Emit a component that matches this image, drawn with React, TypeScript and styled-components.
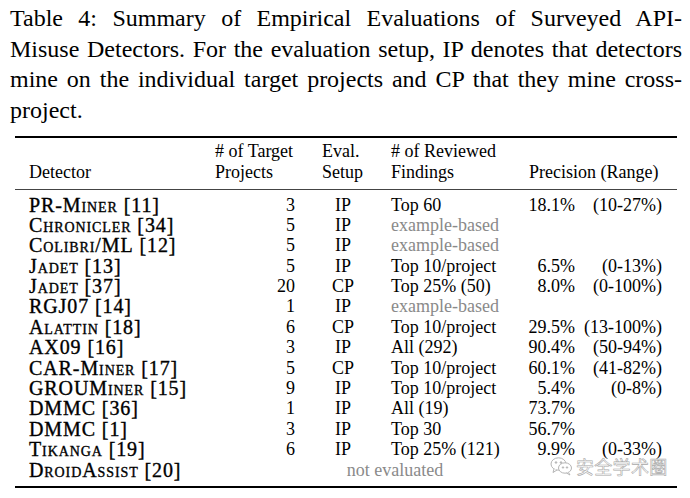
import React, { FC } from 'react';
import styled, { createGlobalStyle } from 'styled-components';

const GlobalStyle = createGlobalStyle`
  body {
    margin: 0;
    background: #fff;
    color: #000;
    font-family: 'Liberation Serif', 'Times New Roman', serif;
  }
`;

type Row = {
  name: string;
  cite: string;
  projects?: string;
  setup?: string;
  findings?: string;
  example?: boolean;
  precision?: string;
  range?: string;
};

const rows: Row[] = [
  { name: 'PR-Miner', cite: '[11]', projects: '3', setup: 'IP', findings: 'Top 60', precision: '18.1%', range: '(10-27%)' },
  { name: 'Chronicler', cite: '[34]', projects: '5', setup: 'IP', findings: 'example-based', example: true },
  { name: 'Colibri/ML', cite: '[12]', projects: '5', setup: 'IP', findings: 'example-based', example: true },
  { name: 'Jadet', cite: '[13]', projects: '5', setup: 'IP', findings: 'Top 10/project', precision: '6.5%', range: '(0-13%)' },
  { name: 'Jadet', cite: '[37]', projects: '20', setup: 'CP', findings: 'Top 25% (50)', precision: '8.0%', range: '(0-100%)' },
  { name: 'RGJ07', cite: '[14]', projects: '1', setup: 'IP', findings: 'example-based', example: true },
  { name: 'Alattin', cite: '[18]', projects: '6', setup: 'CP', findings: 'Top 10/project', precision: '29.5%', range: '(13-100%)' },
  { name: 'AX09', cite: '[16]', projects: '3', setup: 'IP', findings: 'All (292)', precision: '90.4%', range: '(50-94%)' },
  { name: 'CAR-Miner', cite: '[17]', projects: '5', setup: 'CP', findings: 'Top 10/project', precision: '60.1%', range: '(41-82%)' },
  { name: 'GROUMiner', cite: '[15]', projects: '9', setup: 'IP', findings: 'Top 10/project', precision: '5.4%', range: '(0-8%)' },
  { name: 'DMMC', cite: '[36]', projects: '1', setup: 'IP', findings: 'All (19)', precision: '73.7%' },
  { name: 'DMMC', cite: '[1]', projects: '3', setup: 'IP', findings: 'Top 30', precision: '56.7%' },
  { name: 'Tikanga', cite: '[19]', projects: '6', setup: 'IP', findings: 'Top 25% (121)', precision: '9.9%', range: '(0-33%)' },
  { name: 'DroidAssist', cite: '[20]' },
];

const captionLines = [
  'Table 4: Summary of Empirical Evaluations of Surveyed API-',
  'Misuse Detectors. For the evaluation setup, IP denotes that detectors',
  'mine on the individual target projects and CP that they mine cross-',
  'project.',
];

export default function App() {
  return (
    <>
      <GlobalStyle />
      <Page>
        <Caption>
          {captionLines.map((line, i) => (
            <CaptionLine key={i} $last={i === captionLines.length - 1}>
              {line}
            </CaptionLine>
          ))}
        </Caption>

        <Table>
          <HeadRow>
            <HeadCell $pad="0 0 0 14px">Detector</HeadCell>
            <HeadCell $pad="0 0 0 5px">
              # of Target
              <br />
              Projects
            </HeadCell>
            <HeadCell $pad="0 0 0 22px">
              Eval.
              <br />
              Setup
            </HeadCell>
            <HeadCell $pad="0 0 0 5px">
              # of Reviewed
              <br />
              Findings
            </HeadCell>
            <HeadCell $pad="0 0 0 9px" $span={2}>
              Precision (Range)
            </HeadCell>
          </HeadRow>

          <Body>
            {rows.map((row, i) => (
              <TableRow key={i} row={row} />
            ))}
          </Body>
        </Table>

        <Watermark>
          <WeChatIcon />
          <span>安全学术圈</span>
        </Watermark>
      </Page>
    </>
  );
}

const TableRow: FC<{ row: Row }> = ({ row }) => (
  <BodyRow>
    <Name>
      <SmallCaps>{row.name}</SmallCaps> {row.cite}
    </Name>
    {row.setup ? (
      <>
        <Cell $align="right" $pad="0 5px 0 0">{row.projects}</Cell>
        <Cell $align="center">{row.setup}</Cell>
        <Cell $pad="0 0 0 5px" $grey={row.example}>{row.findings}</Cell>
        <Cell $align="right" $pad="0 5px 0 0">{row.precision}</Cell>
        <Cell $align="right" $pad="0 15px 0 0">{row.range}</Cell>
      </>
    ) : (
      <Cell $align="center" $grey $span={4}>not evaluated</Cell>
    )}
  </BodyRow>
);

const WeChatIcon: FC = () => (
  <svg width="25" height="20" viewBox="0 0 24 20" fill="none" stroke="#b5b5b5" strokeWidth="1">
    <ellipse cx="9" cy="8" rx="7.5" ry="6.2" fill="#fff" />
    <path d="M4.5 13 L3.5 16.5 L7.5 14" fill="#fff" />
    <ellipse cx="15.5" cy="12" rx="6.5" ry="5.2" fill="#fff" />
    <path d="M19 16.5 L20.5 19 L17 17" fill="#fff" />
    <circle cx="6.5" cy="6.5" r="0.8" fill="#b5b5b5" />
    <circle cx="11.5" cy="6.5" r="0.8" fill="#b5b5b5" />
    <circle cx="13.5" cy="11.5" r="0.7" fill="#b5b5b5" />
    <circle cx="17.5" cy="11.5" r="0.7" fill="#b5b5b5" />
  </svg>
);

const Page = styled.div`
  position: relative;
  width: 690px;
  height: 498px;
  overflow: hidden;
`;

const Caption = styled.div`
  width: 672px;
  padding: 3px 0 0 10px;
  font-size: 24px;
  line-height: 30.5px;
`;

const CaptionLine = styled.div<{ $last?: boolean }>`
  text-align: justify;
  text-align-last: ${(p) => (p.$last ? 'left' : 'justify')};
  white-space: nowrap;
`;

const Table = styled.div`
  width: 662px;
  margin: 11px 0 0 15px;
  border-top: 2px solid #000;
  border-bottom: 2px solid #000;
  font-size: 18px;
`;

const grid = `
  display: grid;
  grid-template-columns: 195px 90px 86px 134px 60px 97px;
`;

const HeadRow = styled.div`
  ${grid};
  align-items: end;
  padding: 3px 0 6px;
  line-height: 21px;
  border-bottom: 1.2px solid #444;
`;

const HeadCell = styled.div<{ $pad?: string; $span?: number }>`
  padding: ${(p) => p.$pad || '0'};
  grid-column: ${(p) => (p.$span ? `span ${p.$span}` : 'auto')};
  white-space: nowrap;
`;

const Body = styled.div`
  padding: 4.5px 0 6.5px;
`;

const BodyRow = styled.div`
  ${grid};
  height: 20.4px;
  line-height: 20.4px;
`;

const Name = styled.div`
  padding-left: 14px;
  white-space: nowrap;
  font-size: 20px;
  letter-spacing: 0.9px;
  -webkit-text-stroke: 0.35px #000;
`;

const SmallCaps = styled.span`
  font-variant: small-caps;
`;

const Cell = styled.div<{ $align?: string; $pad?: string; $grey?: boolean; $span?: number }>`
  text-align: ${(p) => p.$align || 'left'};
  padding: ${(p) => p.$pad || '0'};
  color: ${(p) => (p.$grey ? '#8a8a8a' : '#000')};
  grid-column: ${(p) => (p.$span ? `span ${p.$span}` : 'auto')};
  white-space: nowrap;
`;

const Watermark = styled.div`
  position: absolute;
  left: 549px;
  top: 456px;
  display: flex;
  align-items: center;
  gap: 2px;
  font-family: 'Noto Sans CJK SC', sans-serif;
  font-size: 18px;
  line-height: 20px;
  color: #fff;
  -webkit-text-stroke: 0.6px #a8a8a8;
  letter-spacing: 0.3px;
`;
